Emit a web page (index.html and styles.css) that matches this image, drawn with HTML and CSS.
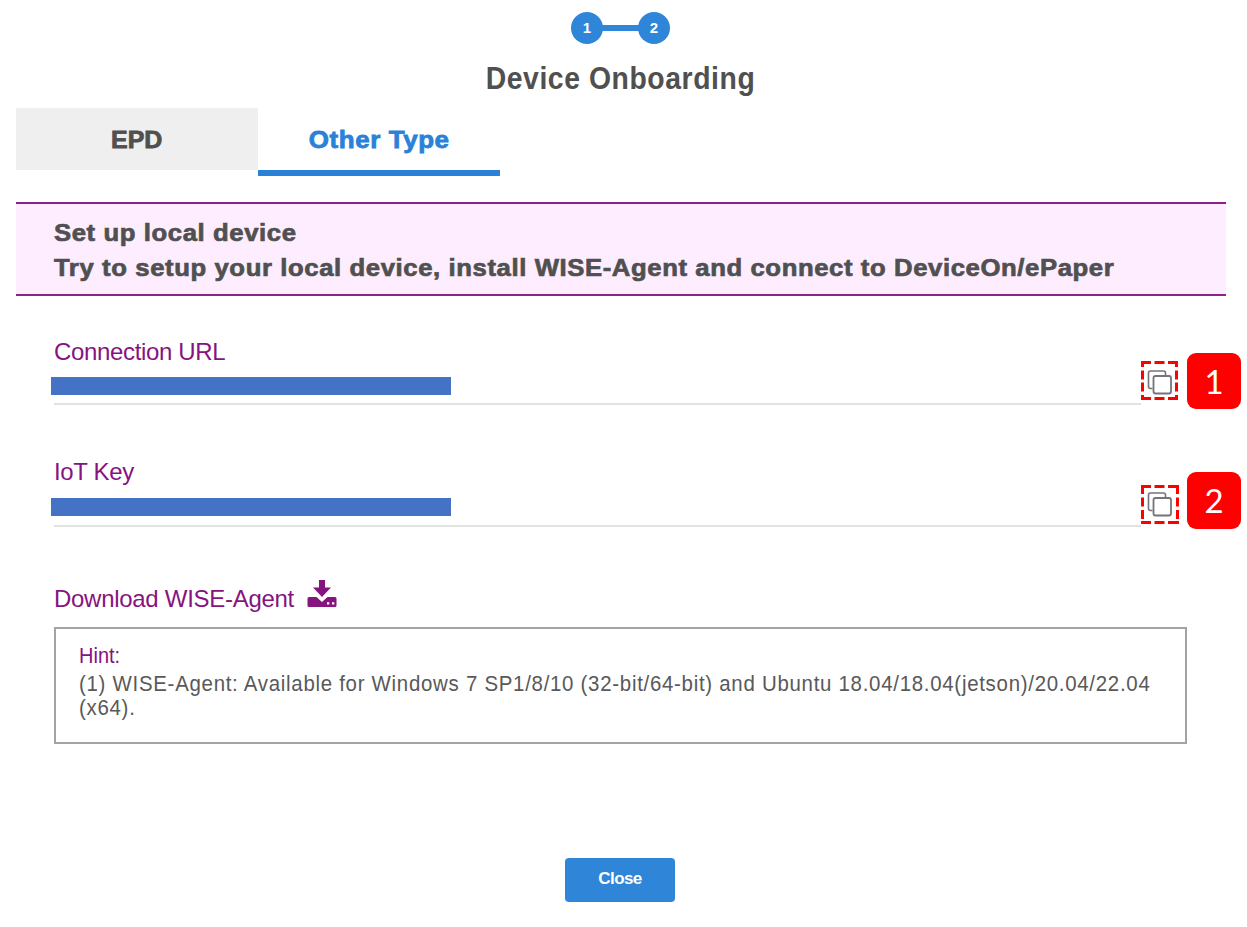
FILE: index.html
```
<!DOCTYPE html>
<html lang="en">
<head>
<meta charset="utf-8">
<title>Device Onboarding</title>
<link rel="stylesheet" href="styles.css">
</head>
<body>
<main class="page">
  <div class="steps"><span class="step">1</span><span class="step-line"></span><span class="step">2</span></div>
  <h1 class="title">Device Onboarding</h1>
  <nav class="tabs">
    <a class="tab tab-epd"><span class="wide">EPD</span></a>
    <a class="tab tab-active"><span class="wide">Other Type</span></a>
  </nav>
  <section class="banner">
    <p class="banner-line">Set up local device</p>
    <p class="banner-line">Try to setup your local device, install WISE-Agent and connect to DeviceOn/ePaper</p>
  </section>
  <section class="field field-url">
    <div class="label">Connection URL</div>
    <div class="value"><div class="mask"></div></div>
    <svg class="copy" width="37" height="39" viewBox="0 0 37 39" fill="none">
      <path d="M1.500 0V39M35.500 0V39" stroke="#f00" stroke-width="3" stroke-dasharray="6 3.500 9 3 9 3.500 9"/>
      <path d="M0 1.500H37M0 37.500H37" stroke="#f00" stroke-width="3" stroke-dasharray="10 3.500 10 3.500 10"/>
      <path d="M11.500 27.500H9.500Q7.500 27.500 7.500 25.500V12Q7.500 10 9.500 10H22.500Q24.500 10 24.500 12V14" stroke="#74747c" stroke-width="1.600"/>
      <rect x="12.500" y="15" width="17.500" height="17.500" rx="2" stroke="#74747c" stroke-width="1.800"/>
    </svg>
    <span class="badge">1</span>
  </section>
  <section class="field field-key">
    <div class="label">IoT Key</div>
    <div class="value"><div class="mask"></div></div>
    <svg class="copy" width="38" height="39" viewBox="0 0 38 39" fill="none">
      <path d="M1.500 0V39M36.500 0V39" stroke="#f00" stroke-width="3" stroke-dasharray="9 3.500 9 3.500 9 3.500"/>
      <path d="M0 1.500H38M0 37.500H38" stroke="#f00" stroke-width="3" stroke-dasharray="10 3.500 10 3.500 11"/>
      <path d="M11.500 25.500H9.500Q7.500 25.500 7.500 23.500V10Q7.500 8 9.500 8H22.500Q24.500 8 24.500 10V12" stroke="#74747c" stroke-width="1.600"/>
      <rect x="12.500" y="13" width="17.500" height="17.500" rx="2" stroke="#74747c" stroke-width="1.800"/>
    </svg>
    <span class="badge">2</span>
  </section>
  <div class="download">
    <span class="label label-dl">Download WISE-Agent</span>
    <svg class="dl-icon" width="30" height="27" viewBox="0 0 30 27">
      <path fill="#86137f" fill-rule="evenodd" d="M12 0H18V7.500H24L15 17 6 7.500H12ZM2 17H9.500L15 22 20.500 17H28Q29.500 17 29.500 18.500V25.500Q29.500 27 28 27H2Q.5 27 .5 25.500V18.500Q.5 17 2 17ZM20 22.300V24.500H22.300V22.300ZM25 22.300V24.500H27.300V22.300Z"/>
    </svg>
  </div>
  <section class="hint">
    <p class="hint-head">Hint:</p>
    <p class="hint-text">(1) WISE-Agent: Available for Windows 7 SP1/8/10 (32-bit/64-bit) and Ubuntu 18.04/18.04(jetson)/20.04/22.04<br>(x64).</p>
  </section>
  <button class="close">Close</button>
</main>
</body>
</html>
```
FILE: styles.css
```
* { box-sizing: border-box; }
body { margin: 0; background: #fff; color: #505050; font-family: "Liberation Sans", Arial, sans-serif; }
p, h1 { margin: 0; white-space: nowrap; }
.page { width: 1247px; height: 927px; padding: 12px 22px 0 16px; display: flex; flex-direction: column; overflow: hidden; }
.steps { display: flex; align-items: center; justify-content: center; height: 32px; }
.step { width: 32px; height: 32px; border-radius: 50%; background: #2f85d8; color: #fff; font-size: 15px; font-weight: bold; line-height: 32px; text-align: center; }
.step-line { width: 37px; height: 6px; margin: 0 -1px; background: #2f85d8; }
.title { margin-top: 14px; height: 40px; line-height: 40px; font-size: 30.5px; letter-spacing: .6px; text-align: center; transform: scaleX(.93); }
.tabs { display: flex; margin-top: 10px; height: 68px; }
.tab { width: 242px; font-size: 24px; font-weight: bold; line-height: 64px; text-align: center; letter-spacing: .55px; -webkit-text-stroke: .8px; }
.wide { display: inline-block; transform: scaleX(1.08); }
.tab-epd { height: 62px; background: #efefef; letter-spacing: 0; }
.tab-epd .wide { transform: scaleX(1.04); }
.tab-active { height: 68px; border-bottom: 6px solid #2a82d8; color: #2a82d8; }
.banner { margin-top: 26px; height: 94px; width: 1210px; padding: 11px 0 0 38px; border: solid #8b2288; border-width: 2px 0; background: #feedff; font-size: 24px; font-weight: bold; line-height: 35px; letter-spacing: .56px; -webkit-text-stroke: .7px; }
.banner-line { transform: scaleX(1.07); transform-origin: 0 50%; }
.field { position: relative; height: 120px; margin-left: 38px; }
.field-url { margin-top: 40px; }
.label { font-size: 24px; line-height: 32px; letter-spacing: -.34px; color: #86137f; white-space: nowrap; }
.value { width: 1087px; border-bottom: 2px solid #e2e2e2; }
.field-url .value { margin-top: 1px; height: 36px; padding-top: 8px; }
.field-key .value { margin-top: 3px; height: 36px; padding-top: 7px; }
.mask { width: 400px; height: 18px; margin-left: -3px; background: #4472c4; }
.copy { position: absolute; left: 1087px; top: 25px; }
.field-key .copy { top: 29px; }
.badge { position: absolute; left: 1133px; top: 17px; width: 54px; height: 56px; border-radius: 9px; background: #f00; color: #fff; font: 33px/56px Lato, sans-serif; text-align: center; }
.field-key .badge { top: 16px; height: 57px; line-height: 57px; }
.download { display: flex; margin: 3px 0 0 38px; height: 48px; }
.label-dl { width: 253px; line-height: 40px; letter-spacing: -.29px; }
.dl-icon { margin-top: 1px; }
.hint { width: 1133px; height: 117px; margin-left: 38px; padding: 13px 0 0 23px; border: 2px solid #a3a3a3; color: #595959; font-size: 21.5px; line-height: 24px; }
.hint-head { line-height: 28px; margin-bottom: 2px; color: #86137f; transform: scaleX(.93); transform-origin: 0 50%; }
.hint-text { letter-spacing: .76px; transform: scaleX(.95); transform-origin: 0 50%; }
.close { align-self: center; width: 110px; height: 44px; margin: 114px 1px 0 0; padding: 0 0 2px; border: 0; border-radius: 4px; background: #2f85d8; color: #fff; font: bold 17px "Liberation Sans", sans-serif; letter-spacing: -.6px; }
```
